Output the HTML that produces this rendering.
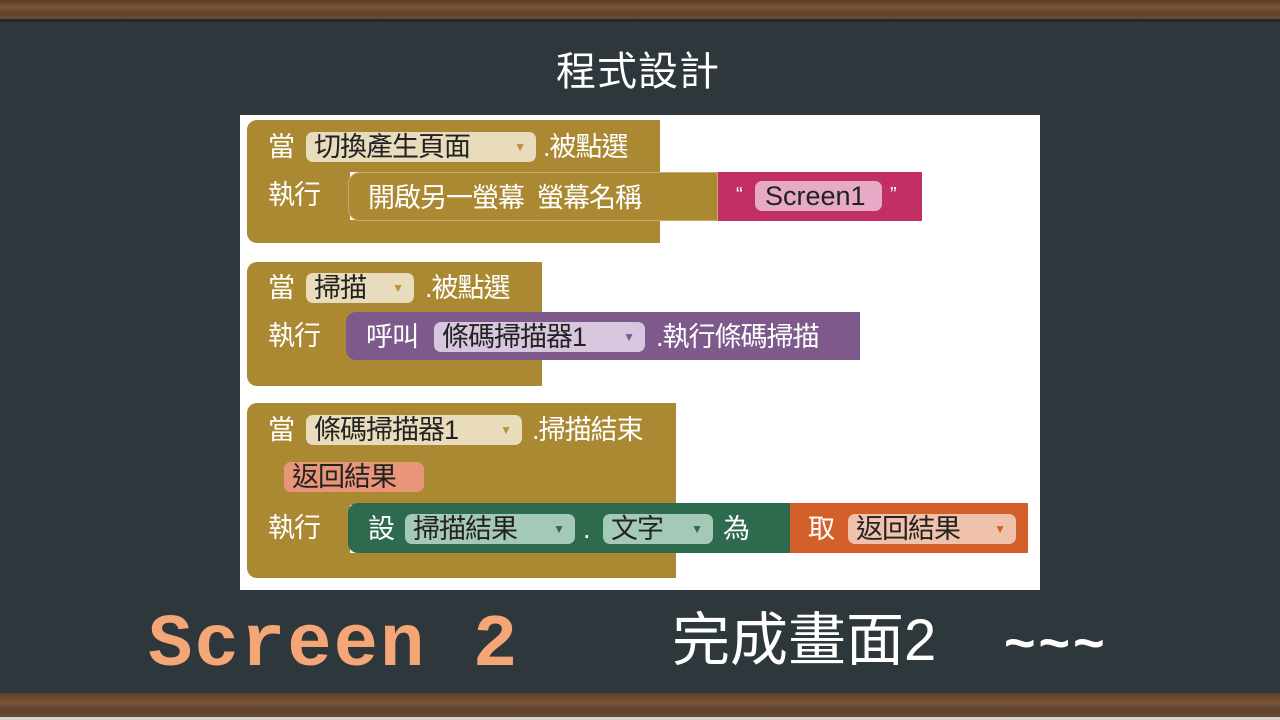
<!DOCTYPE html>
<html><head><meta charset="utf-8"><style>
*{margin:0;padding:0;box-sizing:border-box}
body{width:1280px;height:720px;overflow:hidden;background:#2e373b;position:relative;font-family:"Liberation Sans","Noto Sans CJK TC",sans-serif}
.a{position:absolute}
.wood{background:linear-gradient(180deg,#5a3d28,#7a5538 40%,#5e412b 70%,#6d4b33)}
.t{position:absolute;color:#fff;font-size:27px;line-height:30px;white-space:nowrap;letter-spacing:-1px}
.g{background:#ab8933}
.f{position:absolute;border-radius:7px;height:30px;font-size:27px;line-height:30px;color:#222;padding-left:8px;white-space:nowrap;letter-spacing:-1px}
.f i{position:absolute;right:10px;top:0;font-style:normal;font-size:12px;letter-spacing:0}
</style></head><body>
<div class="a wood" style="left:0;top:0;width:1280px;height:19px"></div>
<div class="a" style="left:0;top:19px;width:1280px;height:3px;background:#22292c"></div>
<div class="a wood" style="left:0;top:693px;width:1280px;height:24px"></div>
<div class="a" style="left:0;top:717px;width:1280px;height:3px;background:#d8d4cc"></div>

<div class="t" style="left:556px;top:50px;font-size:40px;line-height:44px;letter-spacing:1px">程式設計</div>

<div class="a" style="left:240px;top:115px;width:800px;height:475px;background:#fff"></div>

<!-- block 1 -->
<div class="a g" style="left:247px;top:120px;width:413px;height:52px;border-radius:10px 0 0 0"></div>
<div class="a g" style="left:247px;top:170px;width:103px;height:54px"></div>
<div class="a g" style="left:247px;top:220px;width:413px;height:23px;border-radius:0 0 0 10px"></div>
<div class="a" style="left:348px;top:172px;width:370px;height:49px;background:#ab8933;border:1px solid #c7ab62;border-radius:12px 0 0 12px"></div>
<div class="a" style="left:718px;top:172px;width:204px;height:49px;background:#c12f64"></div>
<div class="t" style="left:268px;top:132px">當</div>
<div class="f" style="left:306px;top:132px;width:230px;background:#e9dcbc">切換產生頁面<i style="color:#b8923a">▼</i></div>
<div class="t" style="left:543px;top:132px">.被點選</div>
<div class="t" style="left:268px;top:180px">執行</div>
<div class="t" style="left:368px;top:183px">開啟另一螢幕&nbsp; 螢幕名稱</div>
<div class="t" style="left:736px;top:180px;font-size:20px">“</div>
<div class="f" style="left:755px;top:181px;width:127px;background:#e6a9c6;padding-left:10px;letter-spacing:0">Screen1</div>
<div class="t" style="left:890px;top:180px;font-size:20px">”</div>

<!-- block 2 -->
<div class="a g" style="left:247px;top:262px;width:295px;height:52px;border-radius:10px 0 0 0"></div>
<div class="a g" style="left:247px;top:310px;width:103px;height:54px"></div>
<div class="a g" style="left:247px;top:358px;width:295px;height:28px;border-radius:0 0 0 10px"></div>
<div class="a" style="left:346px;top:312px;width:514px;height:48px;background:#7d5a8b;border-radius:10px 0 0 10px"></div>
<div class="t" style="left:268px;top:273px">當</div>
<div class="f" style="left:306px;top:273px;width:108px;background:#e9dcbc">掃描<i style="color:#b8923a">▼</i></div>
<div class="t" style="left:425px;top:273px">.被點選</div>
<div class="t" style="left:268px;top:321px">執行</div>
<div class="t" style="left:366px;top:322px">呼叫</div>
<div class="f" style="left:434px;top:322px;width:211px;background:#d7c6dd">條碼掃描器1<i style="color:#7d5a8b">▼</i></div>
<div class="t" style="left:656px;top:322px">.執行條碼掃描</div>

<!-- block 3 -->
<div class="a g" style="left:247px;top:403px;width:429px;height:102px;border-radius:10px 0 0 0"></div>
<div class="a g" style="left:247px;top:500px;width:103px;height:56px"></div>
<div class="a g" style="left:247px;top:553px;width:429px;height:25px;border-radius:0 0 0 10px"></div>
<div class="a" style="left:348px;top:503px;width:442px;height:50px;background:#2d6a4e;border-radius:10px 0 0 10px"></div>
<div class="a" style="left:790px;top:503px;width:238px;height:50px;background:#d3602a"></div>
<div class="t" style="left:268px;top:415px">當</div>
<div class="f" style="left:306px;top:415px;width:216px;background:#e9dcbc">條碼掃描器1<i style="color:#b8923a">▼</i></div>
<div class="t" style="left:532px;top:415px">.掃描結束</div>
<div class="f" style="left:284px;top:462px;width:140px;background:#e9957a;color:#222">返回結果</div>
<div class="t" style="left:268px;top:513px">執行</div>
<div class="t" style="left:368px;top:514px">設</div>
<div class="f" style="left:405px;top:514px;width:170px;background:#a5c9b7">掃描結果<i style="color:#2d6a4e">▼</i></div>
<div class="t" style="left:583px;top:514px">.</div>
<div class="f" style="left:603px;top:514px;width:110px;background:#a5c9b7">文字<i style="color:#2d6a4e">▼</i></div>
<div class="t" style="left:723px;top:514px">為</div>
<div class="t" style="left:808px;top:514px">取</div>
<div class="f" style="left:848px;top:514px;width:168px;background:#f0c2ac">返回結果<i style="color:#d3602a">▼</i></div>

<div class="t" style="left:148px;top:606px;font-family:'Liberation Mono',monospace;font-weight:bold;font-size:74px;line-height:80px;color:#f4a677;letter-spacing:2px">Screen 2</div>
<div class="t" style="left:672px;top:608px;font-size:58px;line-height:66px;letter-spacing:0">完成畫面2</div>
<div class="t" style="left:1004px;top:610px;font-size:54px;line-height:66px;letter-spacing:3px;font-weight:bold">~~~</div>
</body></html>
